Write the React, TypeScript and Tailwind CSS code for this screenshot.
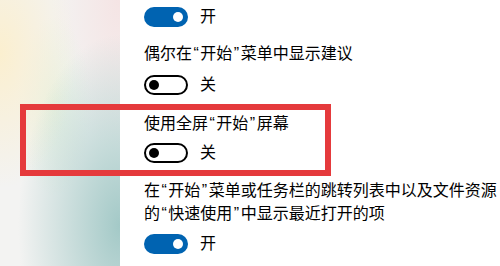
const font = { fontFamily: '"Liberation Sans", "Noto Sans CJK SC", sans-serif' };

function Q({ children }: { children: React.ReactNode }) {
  return <span className="mx-[1.5px]">{children}</span>;
}

function Toggle({ on }: { on: boolean }) {
  return (
    <div className="flex h-[20px] items-center gap-3">
      {on ? (
        <div className="flex h-[20px] w-[44px] items-center justify-end rounded-full bg-[#0063b1] pr-[5px]">
          <div className="h-[10px] w-[10px] rounded-full bg-white" />
        </div>
      ) : (
        <div className="flex h-[20px] w-[44px] items-center rounded-full border-2 border-black pl-[3px]">
          <div className="h-[10px] w-[10px] rounded-full bg-black" />
        </div>
      )}
      <span className="text-[16px] leading-[20px] text-black">{on ? "开" : "关"}</span>
    </div>
  );
}

export default function App() {
  return (
    <div className="relative flex h-[266px] w-[500px] overflow-hidden bg-white" style={font}>
      <div className="h-full w-[120px] shrink-0 bg-[#f3f3f2] bg-[radial-gradient(ellipse_at_100%_85%,#a3c9c7_0%,transparent_60%),radial-gradient(ellipse_at_0%_20%,#fbefcf_0%,transparent_45%),radial-gradient(ellipse_at_45%_40%,#e6f1e2_0%,transparent_40%),radial-gradient(ellipse_at_100%_0%,#f5e4e4_0%,transparent_40%)]" />

      <div className="flex flex-col pl-6 pt-[7px] text-[16px] text-black">
        <Toggle on />
        <p className="mt-[16px] whitespace-nowrap leading-[22px]">
          偶尔在<Q>“</Q>开始<Q>”</Q>菜单中显示建议
        </p>
        <div className="mt-[10px]">
          <Toggle on={false} />
        </div>
        <p className="mt-[18px] whitespace-nowrap leading-[22px]">
          使用全屏<Q>“</Q>开始<Q>”</Q>屏幕
        </p>
        <div className="mt-[8px]">
          <Toggle on={false} />
        </div>
        <div className="mt-[16px] leading-[23px]">
          <p className="whitespace-nowrap">
            在<Q>“</Q>开始<Q>”</Q>菜单或任务栏的跳转列表中以及文件资源
          </p>
          <p className="whitespace-nowrap">
            的<Q>“</Q>快速使用<Q>”</Q>中显示最近打开的项
          </p>
        </div>
        <div className="mt-[9px]">
          <Toggle on />
        </div>
      </div>

      <div className="absolute left-[20px] top-[104px] h-[72px] w-[311px] border-[6px] border-[#e53a3c]" />
    </div>
  );
}
